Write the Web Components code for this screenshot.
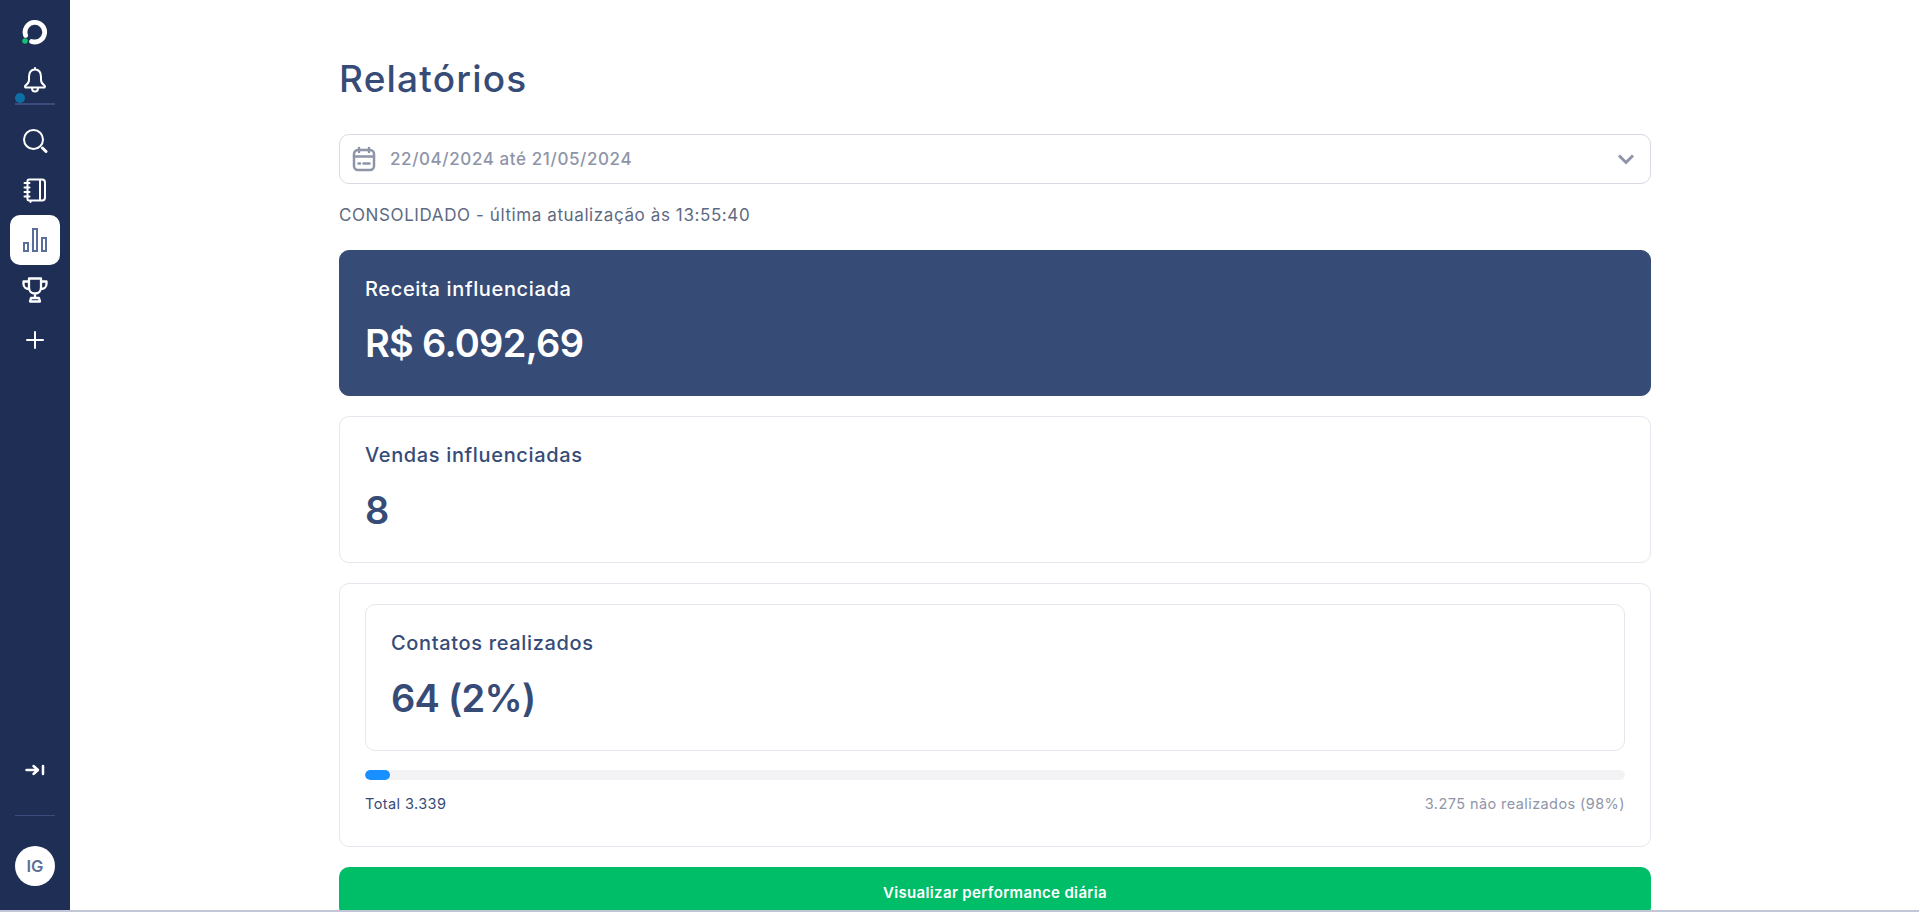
<!DOCTYPE html>
<html lang="pt-BR">
<head>
<meta charset="utf-8">
<title>Relatórios</title>
<style>
    html, body { margin: 0; height: 100%; overflow: hidden; background: #fff; }
    body { font-family: Inter, "Open Sans", sans-serif; }
    app-shell { height: 912px; }
</style>
</head>
<body>
<app-shell>
    <side-nav slot="nav"></side-nav>
    <page-title>Relatórios</page-title>
    <date-select>22/04/2024 até 21/05/2024</date-select>
    <status-line>CONSOLIDADO - última atualização às 13:55:40</status-line>
    <stat-card variant="dark" label="Receita influenciada" value="R$ 6.092,69"></stat-card>
    <stat-card label="Vendas influenciadas" value="8"></stat-card>
    <contacts-panel total="Total 3.339" rest="3.275 não realizados (98%)" percent="2">
        <stat-card label="Contatos realizados" value="64 (2%)"></stat-card>
    </contacts-panel>
    <action-button>Visualizar performance diária</action-button>
</app-shell>

<script>
class AppShell extends HTMLElement {
    constructor() {
        super();
        this.attachShadow({ mode: 'open' });
    }

    connectedCallback() {
        this.shadowRoot.innerHTML = `
            <style>
                :host {
                    display: flex;
                    flex-direction: column;
                    border-bottom: 2px solid #c3c6d6;
                    box-sizing: border-box;
                }
                .row {
                    display: flex;
                    flex: 1;
                    min-height: 0;
                }
                main {
                    flex: 1;
                    min-width: 0;
                    overflow: hidden;
                    padding: 0 268px 0 269px;
                }
                .col {
                    display: flex;
                    flex-direction: column;
                }
            </style>
            <div class="row">
                <slot name="nav"></slot>
                <main><div class="col"><slot></slot></div></main>
            </div>
        `;
    }
}

class SideNav extends HTMLElement {
    constructor() {
        super();
        this.attachShadow({ mode: 'open' });
    }

    connectedCallback() {
        this.shadowRoot.innerHTML = `
            <style>
                :host {
                    display: flex;
                    flex-direction: column;
                    align-items: center;
                    flex: none;
                    width: 70px;
                    box-sizing: border-box;
                    background: #1e2e54;
                    color: #fff;
                }
                svg { display: block; fill: none; stroke: currentColor; stroke-width: 2; stroke-linecap: round; stroke-linejoin: round; }
                .logo { height: 64px; display: flex; align-items: center; }
                .bell {
                    position: relative;
                    box-sizing: border-box;
                    width: 40px;
                    height: 41px;
                    padding-top: 3px;
                    display: flex;
                    justify-content: center;
                    border-bottom: 2px solid #3a4c7b;
                    margin-bottom: 10px;
                }
                .bell i {
                    position: absolute;
                    left: 0;
                    bottom: 0;
                    width: 10px;
                    height: 10px;
                    border-radius: 50%;
                    background: #0d6fa5;
                }
                .item {
                    width: 50px;
                    height: 50px;
                    border-radius: 10px;
                    display: flex;
                    align-items: center;
                    justify-content: center;
                }
                .item.active { background: #fff; color: #5a6f9c; }
                .item.active svg { stroke-linejoin: miter; }
                .spacer { flex: 1; }
                hr {
                    width: 40px;
                    height: 1px;
                    margin: 35px 0 30px;
                    border: 0;
                    background: #3a4c7b;
                }
                .avatar {
                    width: 40px;
                    height: 40px;
                    border-radius: 50%;
                    background: #fff;
                    color: #5f7096;
                    font: 600 16.500px Inter, sans-serif;
                    display: flex;
                    align-items: center;
                    justify-content: center;
                    margin-bottom: 24px;
                }
            </style>
            <div class="logo">
                <svg width="26" height="26" viewBox="0 0 26 26">
                    <path d="M3.600 16.400A9.800 9.800 0 1 1 9.600 22.400" stroke="#fff" stroke-width="4.800"/>
                    <circle cx="3" cy="22" r="2.800" fill="#12c26f" stroke="none"/>
                </svg>
            </div>
            <div class="bell">
                <svg width="26" height="26" viewBox="0 0 26 26">
                    <path d="M13 2.500C8.500 2.500 7 6 7 10v3c0 3-2 4.500-3.500 5.500q-1 1 0 2h19q1-1 0-2C21 17.500 19 16 19 13v-3c0-4-1.500-7.500-6-7.500zM13 1v1.500"/>
                    <path d="M10 21c0 2.800 1.500 3.500 3 3.500s3-.7 3-3.500"/>
                </svg>
                <i></i>
            </div>
            <div class="item">
                <svg width="26" height="26" viewBox="0 0 26 26">
                    <circle cx="11.500" cy="12.500" r="9.500"/><path d="M20.500 21l3.500 3.500" stroke-width="3"/>
                </svg>
            </div>
            <div class="item">
                <svg width="24" height="26" viewBox="0 0 24 26">
                    <path d="M6 2.500h13a3 3 0 0 1 3 3v15a3 3 0 0 1-3 3H6a1.500 1.500 0 0 1-1.500-1.500V4A1.500 1.500 0 0 1 6 2.500zM17 2.500v21"/>
                    <path d="M1.500 6h5M1.500 10.500h5M1.500 15h5M1.500 19.500h5M7.500 24v1"/>
                </svg>
            </div>
            <div class="item active">
                <svg width="26" height="26" viewBox="0 0 26 26">
                    <rect x="2" y="16" width="4" height="8"/><rect x="11" y="2" width="4" height="22"/><rect x="20" y="11" width="4" height="13"/>
                </svg>
            </div>
            <div class="item">
                <svg width="26" height="26" viewBox="0 0 26 26">
                    <path d="M7 1.500h12v9c0 3.500-2.500 6-6 6s-6-2.500-6-6zM7 4.500H1.500v2.500c0 3 2.500 5 5.500 5M19 4.500h5.500v2.500c0 3-2.500 5-5.500 5M13 16.500v4.500M9 21h8l1 3.500H8z" stroke-width="2.300"/>
                </svg>
            </div>
            <div class="item">
                <svg width="20" height="20" viewBox="0 0 20 20"><path d="M10 2v16M2 10h16"/></svg>
            </div>
            <div class="spacer"></div>
            <div class="item" style="height:20px">
                <svg width="20" height="14" viewBox="0 0 20 14">
                    <path d="M1.500 7h11M8.500 3l4.500 4-4.500 4M18 3v8" stroke-width="2.500"/>
                </svg>
            </div>
            <hr>
            <div class="avatar">IG</div>
        `;
    }
}

class PageTitle extends HTMLElement {
    constructor() {
        super();
        this.attachShadow({ mode: 'open' });
    }

    connectedCallback() {
        this.shadowRoot.innerHTML = `
            <style>
                :host {
                    display: block;
                    margin: 51px 0 28px;
                    font-size: 37px;
                    line-height: 55px;
                    letter-spacing: 1.200px;
                    font-weight: 500;
                    color: #364c77;
                }
            </style>
            <slot></slot>
        `;
    }
}

class DateSelect extends HTMLElement {
    constructor() {
        super();
        this.attachShadow({ mode: 'open' });
    }

    connectedCallback() {
        this.shadowRoot.innerHTML = `
            <style>
                :host {
                    display: flex;
                    align-items: center;
                    height: 50px;
                    box-sizing: border-box;
                    padding: 0 15px 0 12px;
                    border: 1px solid #d9dae3;
                    border-radius: 10px;
                    color: #8f95a8;
                    font-size: 17px;
                    letter-spacing: .6px;
                    font-weight: 500;
                }
                svg { display: block; fill: none; stroke: currentColor; flex: none; }
                .cal { margin-right: 14px; stroke-width: 2.500; stroke-linecap: round; }
                .text { flex: 1; }
            </style>
            <svg class="cal" width="24" height="26" viewBox="0 0 24 26">
                <rect x="2" y="4" width="20" height="20" rx="4"/>
                <path d="M2 10.500h20M7 2v4M17 2v4M6.500 17.500h1.500M11.500 17.500h6"/>
            </svg>
            <span class="text"><slot></slot></span>
            <svg width="18" height="12" viewBox="0 0 18 12" stroke-width="3"><path d="M2 2.500l7 7 7-7"/></svg>
        `;
    }
}

class StatusLine extends HTMLElement {
    constructor() {
        super();
        this.attachShadow({ mode: 'open' });
    }

    connectedCallback() {
        this.shadowRoot.innerHTML = `
            <style>
                :host {
                    display: block;
                    margin: 20px 0 23px;
                    font-size: 17px;
                    letter-spacing: .6px;
                    line-height: 23px;
                    color: #5d6a82;
                }
            </style>
            <slot></slot>
        `;
    }
}

class StatCard extends HTMLElement {
    constructor() {
        super();
        this.attachShadow({ mode: 'open' });
    }

    connectedCallback() {
        this.shadowRoot.innerHTML = `
            <style>
                :host {
                    display: block;
                    box-sizing: border-box;
                    height: 147px;
                    margin-bottom: 20px;
                    padding: 24px 25px 0;
                    border: 1px solid #e6e7ee;
                    border-radius: 10px;
                    background: #fff;
                    color: #364c77;
                }
                :host([variant="dark"]) {
                    height: 146px;
                    background: #364c77;
                    border-color: #364c77;
                    color: #fff;
                }
                .label {
                    font-size: 20px;
                    letter-spacing: .65px;
                    line-height: 28px;
                    font-weight: 500;
                }
                .value {
                    margin-top: 14px;
                    font-size: 38px;
                    letter-spacing: -.7px;
                    line-height: 54px;
                    font-weight: 600;
                }
                :host([variant="dark"]) .value { margin-top: 13px; }
            </style>
            <div class="label">${this.getAttribute('label')}</div>
            <div class="value">${this.getAttribute('value')}</div>
        `;
    }
}

class ContactsPanel extends HTMLElement {
    constructor() {
        super();
        this.attachShadow({ mode: 'open' });
    }

    connectedCallback() {
        this.shadowRoot.innerHTML = `
            <style>
                :host {
                    display: block;
                    box-sizing: border-box;
                    height: 264px;
                    margin-bottom: 20px;
                    padding: 20px 25px 0;
                    border: 1px solid #e6e7ee;
                    border-radius: 10px;
                }
                ::slotted(stat-card) { margin-bottom: 19px; }
                .track {
                    height: 10px;
                    border-radius: 5px;
                    background: #f3f3f5;
                    overflow: hidden;
                }
                .fill {
                    height: 100%;
                    min-width: 25px;
                    border-radius: 5px;
                    background: #1890ff;
                }
                .foot {
                    display: flex;
                    justify-content: space-between;
                    margin-top: 13px;
                    font-size: 14.500px;
                    letter-spacing: .42px;
                    line-height: 22px;
                    color: #364c77;
                }
                .rest { color: #9095a8; }
            </style>
            <slot></slot>
            <div class="track"><div class="fill" style="width:${this.getAttribute('percent')}%"></div></div>
            <div class="foot">
                <span>${this.getAttribute('total')}</span>
                <span class="rest">${this.getAttribute('rest')}</span>
            </div>
        `;
    }
}

class ActionButton extends HTMLElement {
    constructor() {
        super();
        this.attachShadow({ mode: 'open' });
    }

    connectedCallback() {
        this.shadowRoot.innerHTML = `
            <style>
                :host {
                    display: flex;
                    align-items: center;
                    justify-content: center;
                    flex: none;
                    height: 50px;
                    border-radius: 10px;
                    background: #00bd68;
                    color: #fff;
                    font-size: 15px;
                    letter-spacing: .35px;
                    font-weight: 600;
                }
            </style>
            <slot></slot>
        `;
    }
}

customElements.define('app-shell', AppShell);
customElements.define('side-nav', SideNav);
customElements.define('page-title', PageTitle);
customElements.define('date-select', DateSelect);
customElements.define('status-line', StatusLine);
customElements.define('stat-card', StatCard);
customElements.define('contacts-panel', ContactsPanel);
customElements.define('action-button', ActionButton);
</script>
</body>
</html>
